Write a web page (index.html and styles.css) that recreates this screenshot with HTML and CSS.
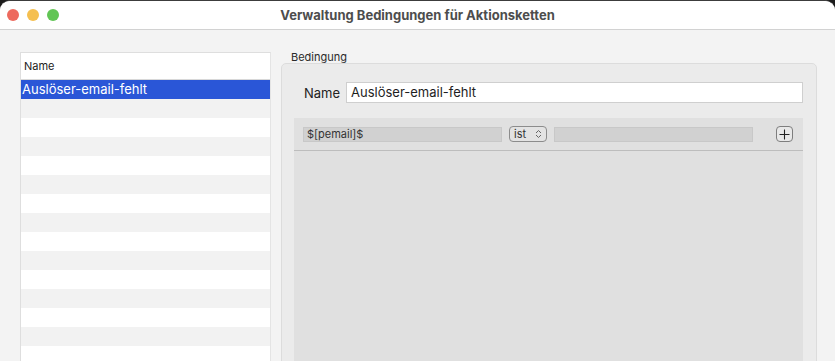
FILE: index.html
```html
<!DOCTYPE html>
<html lang="de">
<head>
  <meta charset="UTF-8">
  <meta name="viewport" content="width=device-width, initial-scale=1.0">
  <title>Verwaltung Bedingungen für Aktionsketten</title>
  <link rel="stylesheet" href="styles.css">
</head>
<body>
  <div class="window">
    <!-- Title bar -->
    <header class="titlebar">
      <div class="lights">
        <span class="light light-close"></span>
        <span class="light light-min"></span>
        <span class="light light-max"></span>
      </div>
      <h1 class="title">Verwaltung Bedingungen für Aktionsketten</h1>
    </header>

    <main class="content">
      <!-- Condition list -->
      <section class="list">
        <div class="list-head">Name</div>
        <div class="row selected">Auslöser-email-fehlt</div>
        <div class="row"></div>
        <div class="row"></div>
        <div class="row"></div>
        <div class="row"></div>
        <div class="row"></div>
        <div class="row"></div>
        <div class="row"></div>
        <div class="row"></div>
        <div class="row"></div>
        <div class="row"></div>
        <div class="row"></div>
        <div class="row"></div>
        <div class="row"></div>
        <div class="row"></div>
      </section>

      <!-- Condition detail -->
      <section class="detail">
        <div class="group-label">Bedingung</div>
        <div class="group">
          <div class="name-row">
            <label class="name-label">Name</label>
            <div class="text-field">Auslöser-email-fehlt</div>
          </div>
          <div class="conditions">
            <div class="cond-row">
              <div class="cond-field">$[pemail]$</div>
              <div class="popup">
                <span>ist</span>
                <svg class="chevrons" width="7" height="10" viewBox="0 0 7 10">
                  <path d="M1 4 L3.5 1.5 L6 4" fill="none" stroke="#666" stroke-width="1"/>
                  <path d="M1 6 L3.5 8.5 L6 6" fill="none" stroke="#666" stroke-width="1"/>
                </svg>
              </div>
              <div class="cond-field"></div>
              <button class="add-btn">
                <svg width="11" height="11" viewBox="0 0 11 11">
                  <path d="M5.5 0.5 V10.5 M0.5 5.5 H10.5" stroke="#222" stroke-width="1.1"/>
                </svg>
              </button>
            </div>
          </div>
        </div>
      </section>
    </main>
  </div>
</body>
</html>
```

FILE: styles.css
```css
/* Page */
html, body {
  margin: 0;
  height: 100%;
  overflow: hidden;
}

body {
  background-color: #1c1c1c;
  font-family: Inter, "Liberation Sans", sans-serif;
  color: #222;
}

.window {
  background-color: #f3f3f3;
  border-top: 1px solid #3c3c3c;
  border-radius: 10px 10px 0 0;
  height: 420px;
  overflow: hidden;
}

/* Title bar */
.titlebar {
  position: relative;
  height: 28px;
  background-color: #ffffff;
  border-bottom: 1px solid #d2d2d2;
  display: flex;
  align-items: center;
  justify-content: center;
}

.lights {
  position: absolute;
  left: 7px;
  top: 8px;
  display: flex;
  gap: 8px;
}

.light {
  width: 12px;
  height: 12px;
  border-radius: 50%;
}

.light-close { background-color: #ed6a5e; }
.light-min { background-color: #f5bf4f; }
.light-max { background-color: #61c554; }

.title {
  margin: 0;
  font-size: 13px;
  font-weight: 700;
  color: #4d4d4d;
}

/* Content */
.content {
  display: flex;
  align-items: flex-start;
  padding: 22px 0 0 20px;
}

/* List */
.list {
  width: 249px;
  height: 400px;
  background-color: #ffffff;
  border: 1px solid #dedede;
  border-right-color: #e4e4e4;
  border-bottom: none;
}

.list-head {
  height: 26px;
  line-height: 26px;
  padding-left: 3px;
  font-size: 11px;
  color: #222;
  border-bottom: 1px solid #d8d8d8;
}

.row {
  height: 19px;
  line-height: 19px;
  padding-left: 1px;
  font-size: 13px;
}

.row:nth-child(odd) {
  background-color: #f2f2f2;
}

.row.selected {
  background-color: #2a56d7;
  color: #ffffff;
}

/* Detail */
.detail {
  width: 536px;
  margin-left: 10px;
}

.group-label {
  font-size: 11px;
  line-height: 11px;
  padding-left: 10px;
  height: 11px;
  color: #2a2a2a;
}

.group {
  height: 320px;
  background-color: #ebebeb;
  border: 1px solid #dcdcdc;
  border-radius: 5px;
  padding: 18px 13px 0 12px;
}

.name-row {
  display: flex;
  align-items: center;
  padding-left: 10px;
  margin-bottom: 15px;
}

.name-label {
  width: 42px;
  font-size: 13px;
  color: #222;
}

.text-field {
  flex: 1;
  height: 19px;
  line-height: 19px;
  padding-left: 4px;
  background-color: #ffffff;
  border: 1px solid #cfcfcf;
  font-size: 13px;
  color: #1e1e1e;
}

/* Conditions */
.conditions {
  height: 260px;
  background-color: #e0e0e0;
}

.cond-row {
  height: 32px;
  display: flex;
  align-items: center;
  padding-left: 9px;
  border-bottom: 1px solid #bdbdbd;
}

.cond-field {
  width: 194px;
  height: 13px;
  line-height: 13px;
  padding-left: 3px;
  background-color: #d1d1d1;
  border: 1px solid #c8c8c8;
  font-size: 11px;
  color: #333;
}

.popup {
  width: 32px;
  height: 14px;
  margin: 0 7px;
  display: flex;
  align-items: center;
  justify-content: space-between;
  padding-left: 4px;
  border: 1px solid #8c8c8c;
  border-radius: 4px;
  background-color: #e3e3e3;
  font-size: 11px;
  color: #333;
}

.chevrons {
  margin-right: 4px;
}

.add-btn {
  width: 17px;
  height: 16px;
  margin-left: 23px;
  padding: 0;
  display: flex;
  align-items: center;
  justify-content: center;
  background-color: #e8e8e8;
  border: 1px solid #7e7e7e;
  border-radius: 4px;
}
```
